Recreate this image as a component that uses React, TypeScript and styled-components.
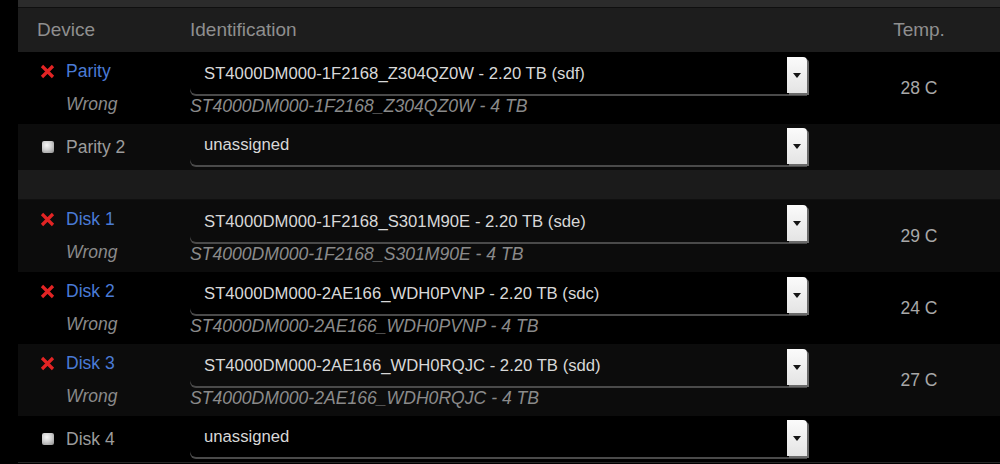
import React from "react";
import styled, { createGlobalStyle } from "styled-components";

const GlobalStyle = createGlobalStyle`
  html, body {
    margin: 0;
    padding: 0;
    background: #000;
  }
  body {
    font-family: "Liberation Sans", Arial, Helvetica, sans-serif;
  }
`;

const cols = "172px 618px 1fr";

const Page = styled.div`
  width: 1000px;
  height: 464px;
  box-sizing: border-box;
  padding-left: 18px;
  overflow: hidden;
  background: #000;
`;

const TopBar = styled.div`
  height: 7px;
  background: #2b2b2b;
  border-bottom: 1px solid #0f0f0f;
`;

const HeaderRow = styled.div`
  display: grid;
  grid-template-columns: ${cols};
  align-items: center;
  height: 44px;
  background: #1d1d1d;
  color: #8f8f8f;
  font-size: 19px;
`;

const HeadCell = styled.div<{ $pad?: number; $center?: boolean }>`
  padding-left: ${(p) => p.$pad ?? 0}px;
  text-align: ${(p) => (p.$center ? "center" : "left")};
`;

const Row = styled.div<{ $tall?: boolean; $shade?: boolean }>`
  display: grid;
  grid-template-columns: ${cols};
  height: ${(p) => (p.$tall ? 72 : 46)}px;
  background: ${(p) => (p.$shade ? "#0c0c0c" : "#000")};
`;

const Spacer = styled.div`
  height: 29px;
  background: #1b1b1b;
  border-bottom: 1px solid #101010;
`;

const BottomEdge = styled.div`
  height: 1px;
  background: #262626;
`;

const DeviceCell = styled.div`
  display: flex;
  flex-direction: column;
  justify-content: center;
  padding-left: 22px;
  line-height: 33px;
  font-size: 17.5px;
`;

const DeviceLine = styled.div`
  display: flex;
  align-items: center;
  gap: 11px;
`;

const IconSlot = styled.span`
  display: flex;
  align-items: center;
  justify-content: center;
  width: 15px;
  height: 15px;
`;

const Idle = styled.span`
  width: 12px;
  height: 12px;
  border-radius: 2px;
  background: radial-gradient(circle at 40% 35%, #f6f6f6 0%, #cfcfcf 45%, #8a8a8a 100%);
`;

const DeviceName = styled.span<{ $active?: boolean }>`
  color: ${(p) => (p.$active ? "#4a7bd6" : "#9c9c9c")};
`;

const Status = styled.div`
  padding-left: 26px;
  color: #8a8a8a;
  font-style: italic;
`;

const IdCell = styled.div<{ $tall?: boolean }>`
  padding-top: ${(p) => (p.$tall ? 5 : 4)}px;
`;

const SelectBox = styled.div`
  display: flex;
  justify-content: space-between;
  width: 617px;
  height: 37px;
  border-radius: 0 0 0 6px;
  box-shadow: 0 2px 0 #4a4a4a;
`;

const SelectText = styled.span`
  padding: 7px 0 0 14px;
  line-height: 20px;
  font-size: 16.7px;
  color: #d8d8d8;
  white-space: nowrap;
`;

const SelectButton = styled.span`
  display: flex;
  align-items: center;
  justify-content: center;
  flex: none;
  width: 20px;
  height: 36px;
  border-radius: 0 4px 0 0;
  background: linear-gradient(#fbfbfb, #e4e4e4);
  box-shadow: 2px 2px 0 #6a6a6a;
`;

const Arrow = styled.span`
  width: 0;
  height: 0;
  border-left: 4px solid transparent;
  border-right: 4px solid transparent;
  border-top: 5px solid #151515;
`;

const Expected = styled.div`
  margin-top: 2px;
  line-height: 20px;
  font-size: 17.6px;
  font-style: italic;
  color: #8a8a8a;
  white-space: nowrap;
`;

const TempCell = styled.div`
  display: flex;
  align-items: center;
  justify-content: center;
  padding-left: 30px;
  font-size: 17.5px;
  color: #a8a8a8;
`;

const WrongIcon = () => (
  <svg width="15" height="15" viewBox="0 0 15 15">
    <path d="M2 2 L13 13 M13 2 L2 13" stroke="#e32424" strokeWidth="3.2" />
  </svg>
);

type Disk = {
  name: string;
  id: string;
  expected?: string;
  temp?: string;
  shade?: boolean;
};

const DiskRow = ({ disk }: { disk: Disk }) => {
  const wrong = !!disk.expected;
  return (
    <Row $tall={wrong} $shade={disk.shade}>
      <DeviceCell>
        <DeviceLine>
          <IconSlot>{wrong ? <WrongIcon /> : <Idle />}</IconSlot>
          <DeviceName $active={wrong}>{disk.name}</DeviceName>
        </DeviceLine>
        {wrong ? <Status>Wrong</Status> : null}
      </DeviceCell>
      <IdCell $tall={wrong}>
        <SelectBox>
          <SelectText>{disk.id}</SelectText>
          <SelectButton>
            <Arrow />
          </SelectButton>
        </SelectBox>
        {wrong ? <Expected>{disk.expected}</Expected> : null}
      </IdCell>
      <TempCell>{disk.temp}</TempCell>
    </Row>
  );
};

const parity: Disk[] = [
  {
    name: "Parity",
    id: "ST4000DM000-1F2168_Z304QZ0W - 2.20 TB (sdf)",
    expected: "ST4000DM000-1F2168_Z304QZ0W - 4 TB",
    temp: "28 C",
  },
  { name: "Parity 2", id: "unassigned", shade: true },
];

const disks: Disk[] = [
  {
    name: "Disk 1",
    id: "ST4000DM000-1F2168_S301M90E - 2.20 TB (sde)",
    expected: "ST4000DM000-1F2168_S301M90E - 4 TB",
    temp: "29 C",
    shade: true,
  },
  {
    name: "Disk 2",
    id: "ST4000DM000-2AE166_WDH0PVNP - 2.20 TB (sdc)",
    expected: "ST4000DM000-2AE166_WDH0PVNP - 4 TB",
    temp: "24 C",
  },
  {
    name: "Disk 3",
    id: "ST4000DM000-2AE166_WDH0RQJC - 2.20 TB (sdd)",
    expected: "ST4000DM000-2AE166_WDH0RQJC - 4 TB",
    temp: "27 C",
    shade: true,
  },
  { name: "Disk 4", id: "unassigned" },
];

const App = () => (
  <>
    <GlobalStyle />
    <Page>
      <TopBar />
      <HeaderRow>
        <HeadCell $pad={19}>Device</HeadCell>
        <HeadCell>Identification</HeadCell>
        <HeadCell $pad={30} $center>
          Temp.
        </HeadCell>
      </HeaderRow>
      {parity.map((d) => (
        <DiskRow key={d.name} disk={d} />
      ))}
      <Spacer />
      {disks.map((d) => (
        <DiskRow key={d.name} disk={d} />
      ))}
      <BottomEdge />
    </Page>
  </>
);

export default App;
